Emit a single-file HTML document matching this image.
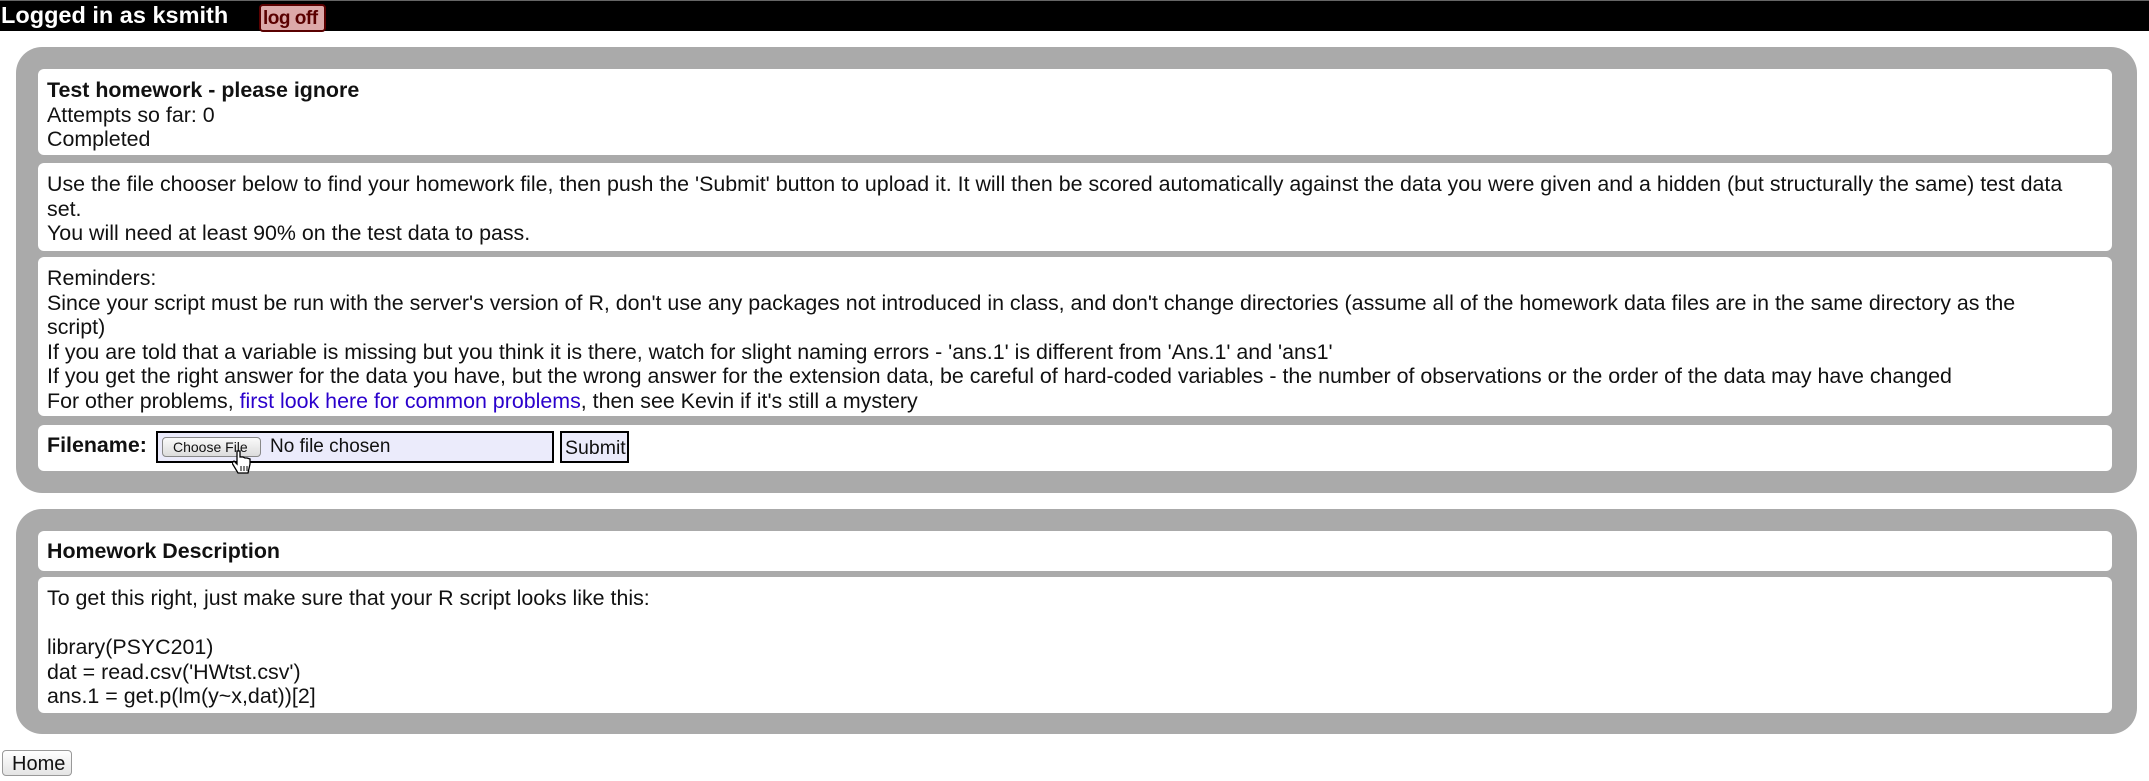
<!DOCTYPE html>
<html><head><meta charset="utf-8"><style>
*{margin:0;padding:0;box-sizing:border-box}
body{width:2149px;height:781px;background:#fff;position:relative;overflow:hidden;font-family:"Liberation Sans",Arial,sans-serif;color:#111}
.bar{position:absolute;left:0;top:0;width:2149px;height:31px;background:#000;border-top:1px solid #666}
.t{position:absolute;white-space:nowrap;font-size:21.4px;line-height:24.5px}
.panel{position:absolute;left:16px;width:2121px;background:#aaa;border-radius:26px}
.box{position:absolute;left:38px;width:2074px;background:#fff;border-radius:6px}
.box .t{left:9px;top:9px}
a{color:#2a00cc;text-decoration:none}
</style></head><body>
<div class="bar">
 <div class="t" style="left:1px;top:1px;color:#fff;font-weight:bold;font-size:23.5px;line-height:26px">Logged in as ksmith</div>
 <div style="position:absolute;left:259px;top:3px;width:67px;height:28px;background:#dca9a9;border:2px solid #5a0000;border-radius:4px"></div>
 <div class="t" style="left:263px;top:5px;color:#5a0000;font-weight:bold;font-size:19px;line-height:26px;letter-spacing:-0.5px">log off</div>
</div>

<div class="panel" style="top:47px;height:446px"></div>
<div class="box" style="top:69px;height:86px"><div class="t"><b>Test homework - please ignore</b><br>Attempts so far: 0<br>Completed</div></div>
<div class="box" style="top:163px;height:88px"><div class="t">Use the file chooser below to find your homework file, then push the 'Submit' button to upload it. It will then be scored automatically against the data you were given and a hidden (but structurally the same) test data<br>set.<br>You will need at least 90% on the test data to pass.</div></div>
<div class="box" style="top:257px;height:159px"><div class="t">Reminders:<br>Since your script must be run with the server's version of R, don't use any packages not introduced in class, and don't change directories (assume all of the homework data files are in the same directory as the<br>script)<br>If you are told that a variable is missing but you think it is there, watch for slight naming errors - 'ans.1' is different from 'Ans.1' and 'ans1'<br>If you get the right answer for the data you have, but the wrong answer for the extension data, be careful of hard-coded variables - the number of observations or the order of the data may have changed<br>For other problems, <a>first look here for common problems</a>, then see Kevin if it's still a mystery</div></div>
<div class="box" style="top:425px;height:46px">
 <div class="t" style="top:8px"><b>Filename:</b></div>
 <div style="position:absolute;left:118px;top:6px;width:398px;height:32px;background:#ebebfb;border:2px solid #000"></div>
 <div style="position:absolute;left:124px;top:12px;width:99px;height:20px;background:linear-gradient(#fafafa,#dcdcdc);border:1px solid #888;border-radius:4px"></div>
 <div class="t" style="left:135px;top:12px;font-size:14px;line-height:20px">Choose File</div>
 <div class="t" style="left:232px;top:10px;font-size:19px;line-height:24px">No file chosen</div>
 <div style="position:absolute;left:522px;top:6px;width:69px;height:32px;background:#ebebfb;border:2px solid #000"></div>
 <div class="t" style="left:527px;top:11px;font-size:19.5px;line-height:24px">Submit</div>
 <svg style="position:absolute;left:194px;top:25px" width="20" height="25" viewBox="0 0 20 25"><path d="M5 1v13l-3-3-2 2 6 10h10l2-9v-5l-3-1-2 0-2-1-3 0V1z" fill="#fff" stroke="#000" stroke-width="1.3"/><path d="M9 16v5M12 16v5M15 16v5" stroke="#000" stroke-width="1"/></svg>
</div>

<div class="panel" style="top:509px;height:225px"></div>
<div class="box" style="top:531px;height:40px"><div class="t" style="top:8px"><b>Homework Description</b></div></div>
<div class="box" style="top:577px;height:136px"><div class="t">To get this right, just make sure that your R script looks like this:<br><br>library(PSYC201)<br>dat = read.csv('HWtst.csv')<br>ans.1 = get.p(lm(y~x,dat))[2]</div></div>

<div style="position:absolute;left:2px;top:750px;width:70px;height:26px;border:1px solid #999;border-radius:4px;background:linear-gradient(#fff,#e4e4e4)"></div>
<div class="t" style="left:12px;top:752px;font-size:20px;line-height:24px">Home</div>
</body></html>
